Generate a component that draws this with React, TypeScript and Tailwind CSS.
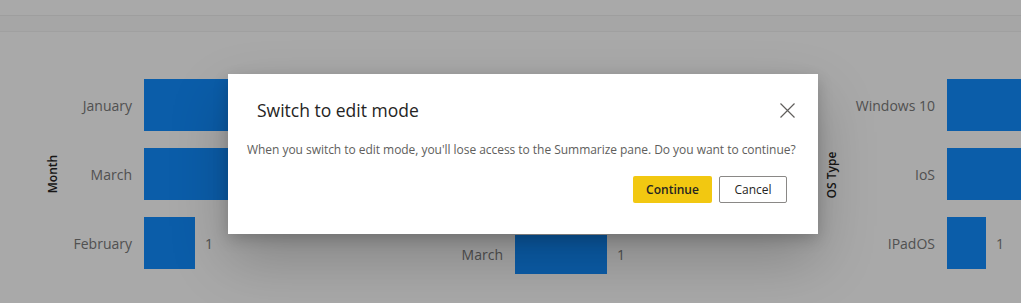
import React from 'react';

const font = { fontFamily: '"Open Sans", "Noto Sans", sans-serif' };

function Bar({ label, width, value, labelW, barH }: { label: string; width: number; value?: string; labelW: string; barH: string }) {
  return (
    <div className={`flex items-center ${barH}`}>
      <div className={`${labelW} shrink-0 text-right pr-[12px] text-[14px] text-[#7a7a7a]`}>{label}</div>
      <div className="h-full bg-[#118dff] shrink-0" style={{ width }} />
      {value && <div className="pl-[10px] text-[14px] text-[#7a7a7a]">{value}</div>}
    </div>
  );
}

export default function App() {
  return (
    <div className="relative w-[1021px] h-[303px] overflow-hidden bg-white" style={font}>
      <div className="h-[16px] bg-white border-b border-[#efefef]" />
      <div className="h-[16px] bg-[#fafafa] border-b border-[#f1f1f1]" />

      <div className="flex h-[271px]">
        {/* left chart */}
        <div className="flex w-[420px] shrink-0 overflow-hidden">
          <div className="w-[40px] ml-[33px] shrink-0 flex items-center justify-center pt-[12px]">
            <span className="-rotate-90 text-[12px] font-semibold text-[#252423] whitespace-nowrap">Month</span>
          </div>
          <div className="flex flex-col gap-[17px] pt-[47px] shrink-0">
            <Bar label="January" width={300} labelW="w-[71px]" barH="h-[52px]" />
            <Bar label="March" width={300} labelW="w-[71px]" barH="h-[52px]" />
            <Bar label="February" width={51} value="1" labelW="w-[71px]" barH="h-[52px]" />
          </div>
        </div>

        {/* middle chart, mostly under the dialog */}
        <div className="flex w-[390px] shrink-0">
          <div className="flex flex-col gap-[13px] pt-[99px] pl-[22px]">
            <Bar label="" width={160} labelW="w-[73px]" barH="h-[39px]" />
            <Bar label="" width={92} labelW="w-[73px]" barH="h-[39px]" />
            <Bar label="March" width={92} value="1" labelW="w-[73px]" barH="h-[39px]" />
          </div>
        </div>

        {/* right chart */}
        <div className="flex flex-1">
          <div className="w-[40px] shrink-0 flex items-center justify-center pt-[14px] pl-[4px]">
            <span className="-rotate-90 text-[12px] font-semibold text-[#252423] whitespace-nowrap">OS Type</span>
          </div>
          <div className="flex flex-col gap-[17px] pt-[47px] shrink-0">
            <Bar label="Windows 10" width={200} labelW="w-[97px]" barH="h-[52px]" />
            <Bar label="IoS" width={200} labelW="w-[97px]" barH="h-[52px]" />
            <Bar label="IPadOS" width={39} value="1" labelW="w-[97px]" barH="h-[52px]" />
          </div>
        </div>
      </div>

      <div className="absolute inset-0 bg-black/[0.337]" />

      <div className="absolute left-[228px] top-[74px] w-[590px] h-[160px] bg-white shadow-[0_25px_58px_rgba(0,0,0,0.22),0_5px_14px_rgba(0,0,0,0.18)]">
        <div className="flex items-center justify-between pt-[24px] pl-[29px] pr-[22px]">
          <h2 className="text-[17.5px] leading-[24px] text-[#252423]">Switch to edit mode</h2>
          <svg width="15" height="15" viewBox="0 0 15 15" className="mt-[1px] mr-[1px]">
            <path d="M0.5 0.5L14.5 14.5M14.5 0.5L0.5 14.5" stroke="#605e5c" strokeWidth="1.2" fill="none" />
          </svg>
        </div>
        <p className="mt-[20px] pl-[19px] text-[12px] leading-[16px] tracking-[-0.04px] text-[#605e5c] whitespace-nowrap">
          When you switch to edit mode, you'll lose access to the Summarize pane. Do you want to continue?
        </p>
        <div className="flex justify-end gap-[7px] mt-[18px] pr-[31px]">
          <button className="h-[27px] w-[79px] bg-[#f2c811] text-[12px] font-semibold text-[#252423] rounded-[2px]">Continue</button>
          <button className="h-[27px] w-[68px] bg-white border border-[#8a8886] text-[12px] text-[#252423] rounded-[2px]">Cancel</button>
        </div>
      </div>
    </div>
  );
}
